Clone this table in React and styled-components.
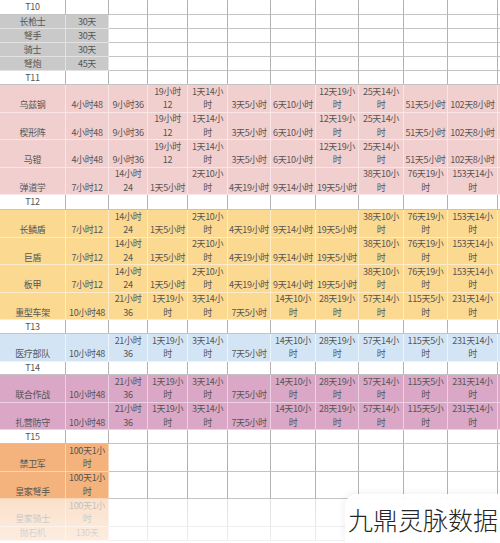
import React from "react";
import styled, { createGlobalStyle } from "styled-components";

const Global = createGlobalStyle`
  html, body { margin: 0; padding: 0; background: #fff; }
  body { width: 500px; height: 543px; overflow: hidden; }
`;

const COLS = [66, 43, 39, 40, 40, 43, 45, 43, 45, 44, 50, 20];

const Page = styled.div`
  position: relative;
  width: 500px;
  height: 543px;
  overflow: hidden;
  font-family: "Noto Sans CJK SC", "Noto Sans", sans-serif;
`;

const Sheet = styled.div`
  display: flex;
  flex-direction: column;
  width: ${COLS.reduce((a, b) => a + b, 0)}px;
`;

const Row = styled.div`
  display: grid;
  grid-template-columns: ${COLS.map((c) => c + "px").join(" ")};
  height: ${(p) => p.$h}px;
`;

const Cell = styled.div`
  box-sizing: border-box;
  border-right: 1px solid ${(p) => (p.$fill ? p.$fill.line : "#b3b3b3")};
  border-bottom: 1px solid ${(p) => (p.$fill ? p.$fill.line : "#c4c4c4")};
  background: ${(p) => (p.$fill ? p.$fill.bg : "#fff")};
  display: flex;
  flex-direction: column;
  align-items: center;
  justify-content: ${(p) => (p.$mid ? "center" : "flex-end")};
  font-size: 9px;
  line-height: 13.5px;
  color: #555;
  white-space: nowrap;
  overflow: hidden;
  letter-spacing: -0.35px;
`;

const Line = styled.span`
  display: block;
`;

const Fade = styled.div`
  position: absolute;
  left: 0;
  right: 0;
  top: 499px;
  bottom: 0;
  background: linear-gradient(
    to bottom,
    rgba(255, 255, 255, 0.6),
    rgba(255, 255, 255, 0.78)
  );
`;

const Watermark = styled.div`
  position: absolute;
  right: 0;
  bottom: 0;
  width: 155px;
  height: 49px;
  background: rgba(255, 255, 255, 0.95);
  border-top-left-radius: 12px;
  box-shadow: -2px -2px 6px rgba(0, 0, 0, 0.05);
  display: flex;
  align-items: center;
  justify-content: flex-end;
  padding-right: 2px;
  box-sizing: border-box;
  font-family: "Noto Sans CJK SC", sans-serif;
  font-weight: 300;
  font-size: 25px;
  color: #262626;
`;

const GREY = { bg: "#c9c9c9", line: "#e2e2e2" };
const PINK = { bg: "#f2cfcf", line: "#f9e6e6" };
const YELLOW = { bg: "#fcd991", line: "#feeccb" };
const BLUE = { bg: "#d3e5f5", line: "#ebf3fb" };
const MAUVE = { bg: "#dba7c7", line: "#ecd1e2" };
const ORANGE = { bg: "#f4b27c", line: "#f9d5b8" };

const A = ["4小时48", "9小时36", "19小时|12", "1天14小|时", "3天5小时", "6天10小时", "12天19小|时", "25天14小|时", "51天5小时", "102天8小时"];
const B = ["7小时12", "14小时|24", "1天5小时", "2天10小|时", "4天19小时", "9天14小时", "19天5小时", "38天10小|时", "76天19小|时", "153天14小|时"];
const C = ["10小时48", "21小时|36", "1天19小|时", "3天14小|时", "7天5小时", "14天10小|时", "28天19小|时", "57天14小|时", "115天5小|时", "231天14小|时"];

const rows = [
  { tier: "T10", h: 15 },
  { label: "长枪士", vals: ["30天"], fill: GREY, span: 2, h: 14 },
  { label: "弩手", vals: ["30天"], fill: GREY, span: 2, h: 14 },
  { label: "骑士", vals: ["30天"], fill: GREY, span: 2, h: 14 },
  { label: "弩炮", vals: ["45天"], fill: GREY, span: 2, h: 14 },
  { tier: "T11", h: 14 },
  { label: "乌兹钢", vals: A, fill: PINK, span: 12, h: 27.5 },
  { label: "楔形阵", vals: A, fill: PINK, span: 12, h: 27.5 },
  { label: "马镫", vals: A, fill: PINK, span: 12, h: 27.5 },
  { label: "弹道学", vals: B, fill: PINK, span: 12, h: 27.5 },
  { tier: "T12", h: 15 },
  { label: "长鳞盾", vals: B, fill: YELLOW, span: 12, h: 27.5 },
  { label: "巨盾", vals: B, fill: YELLOW, span: 12, h: 27.5 },
  { label: "板甲", vals: B, fill: YELLOW, span: 12, h: 27.5 },
  { label: "重型车架", vals: C, fill: YELLOW, span: 12, h: 27.5 },
  { tier: "T13", h: 14 },
  { label: "医疗部队", vals: C, fill: BLUE, span: 12, h: 27.5 },
  { tier: "T14", h: 13.5 },
  { label: "联合作战", vals: C, fill: MAUVE, span: 12, h: 27.5 },
  { label: "扎营防守", vals: C, fill: MAUVE, span: 12, h: 27.5 },
  { tier: "T15", h: 14 },
  { label: "禁卫军", vals: ["100天1小|时"], fill: ORANGE, span: 2, h: 27.5 },
  { label: "皇家弩手", vals: ["100天1小|时"], fill: ORANGE, span: 2, h: 27.5 },
  { label: "皇家骑士", vals: ["100天1小|时"], fill: ORANGE, span: 2, h: 27.5 },
  { label: "抛石机", vals: ["130天"], fill: ORANGE, span: 2, h: 14 },
];

function Text({ v }) {
  if (!v) return null;
  return v.split("|").map((l, i) => <Line key={i}>{l}</Line>);
}

export default function App() {
  return (
    <>
      <Global />
      <Page>
        <Sheet>
          {rows.map((r, ri) => {
            const cells = COLS.map((_, ci) => {
              if (r.tier) {
                return (
                  <Cell key={ci} $mid>
                    {ci === 0 ? r.tier : null}
                  </Cell>
                );
              }
              const fill = ci < r.span ? r.fill : null;
              const v = ci === 0 ? r.label : r.vals[ci - 1];
              return (
                <Cell key={ci} $fill={fill} $mid={r.h < 20}>
                  <Text v={v} />
                </Cell>
              );
            });
            return (
              <Row key={ri} $h={r.h}>
                {cells}
              </Row>
            );
          })}
        </Sheet>
        <Fade />
        <Watermark>九鼎灵脉数据</Watermark>
      </Page>
    </>
  );
}
